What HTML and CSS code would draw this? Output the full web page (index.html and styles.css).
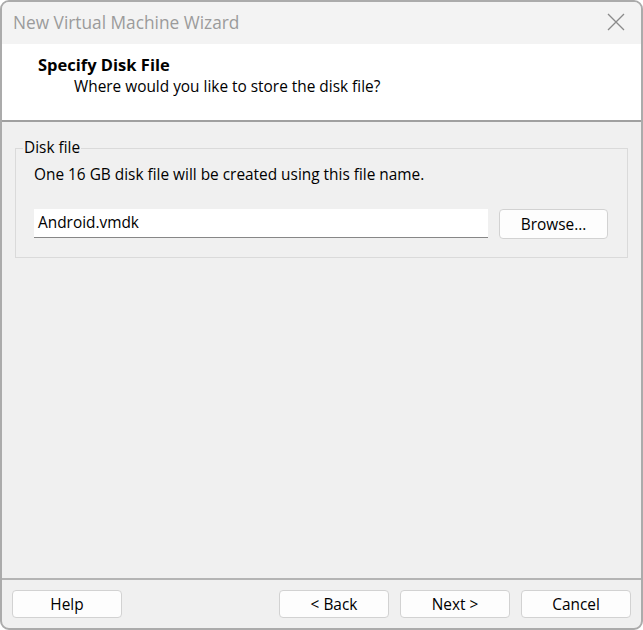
FILE: index.html
```html
<!DOCTYPE html>
<html>
<head>
<meta charset="utf-8">
<link rel="stylesheet" href="styles.css">
</head>
<body>
<div class="window">
  <div class="titlebar">
    <span class="title">New Virtual Machine Wizard</span>
    <svg class="close" width="18" height="18" viewBox="0 0 18 18"><path d="M1 1 L17 17 M17 1 L1 17" stroke="#8a8a8a" stroke-width="1.3" fill="none"/></svg>
  </div>
  <div class="header">
    <div class="h-title">Specify Disk File</div>
    <div class="h-sub">Where would you like to store the disk file?</div>
  </div>
  <div class="content">
    <fieldset class="group">
      <legend>Disk file</legend>
      <div class="desc">One 16 GB disk file will be created using this file name.</div>
      <div class="file-row">
        <div class="input">Android.vmdk</div>
        <div class="btn browse">Browse...</div>
      </div>
    </fieldset>
  </div>
  <div class="footer">
    <div class="btn">Help</div>
    <div class="spacer"></div>
    <div class="btn">&lt; Back</div>
    <div class="btn">Next &gt;</div>
    <div class="btn">Cancel</div>
  </div>
</div>
</body>
</html>
```
FILE: styles.css
```css
html, body {
  margin: 0;
  padding: 0;
  width: 643px;
  height: 630px;
  background: #ffffff;
  overflow: hidden;
}
.window {
  box-sizing: border-box;
  width: 643px;
  height: 630px;
  border: 2px solid #ababab;
  border-radius: 9px;
  background: #f0f0f0;
  display: flex;
  flex-direction: column;
  overflow: hidden;
  font-family: "Open Sans", "Noto Sans", sans-serif;
  font-size: 15.4px;
  color: #000;
}
.titlebar {
  height: 42px;
  flex: none;
  background: #f3f3f3;
  display: flex;
  align-items: center;
  padding-left: 11px;
  padding-right: 16px;
}
.title {
  font-size: 17.3px;
  color: #9b9b9b;
  flex: 1;
  margin-top: -2px;
}
.close {
  display: block;
  margin-top: -2px;
}
.header {
  flex: none;
  background: #ffffff;
  border-bottom: 2px solid #a0a0a0;
  box-sizing: border-box;
  height: 78px;
  padding: 10px 0 0 36px;
}
.h-title {
  font-weight: bold;
  font-size: 16.5px;
  line-height: 22px;
}
.h-sub {
  padding-left: 36px;
  line-height: 22px;
}
.content {
  flex: 1;
  padding: 16px 13px 0 13px;
}
.group {
  margin: 0;
  border: 1px solid #dadada;
  padding: 0 19px 18px 18px;
}
.group legend {
  padding: 0 1px;
  margin-left: -11px;
  line-height: 20px;
}
.desc {
  line-height: 22px;
  margin-top: 6px;
}
.file-row {
  display: flex;
  gap: 11px;
  margin-top: 23px;
}
.input {
  flex: 1;
  height: 29px;
  box-sizing: border-box;
  background: #fff;
  border-bottom: 1px solid #878787;
  padding: 2px 4px;
  line-height: 24px;
}
.btn {
  box-sizing: border-box;
  width: 110px;
  height: 28px;
  background: #fdfdfd;
  border: 1px solid #d2d2d2;
  border-radius: 4px;
  text-align: center;
  line-height: 28px;
}
.browse {
  width: 109px;
  height: 30px;
  line-height: 30px;
}
.footer {
  flex: none;
  height: 50px;
  box-sizing: border-box;
  border-top: 2px solid #b4b4b4;
  display: flex;
  align-items: flex-start;
  padding: 10px 10px 0 10px;
  gap: 11px;
}
.spacer {
  flex: 1;
}
```
